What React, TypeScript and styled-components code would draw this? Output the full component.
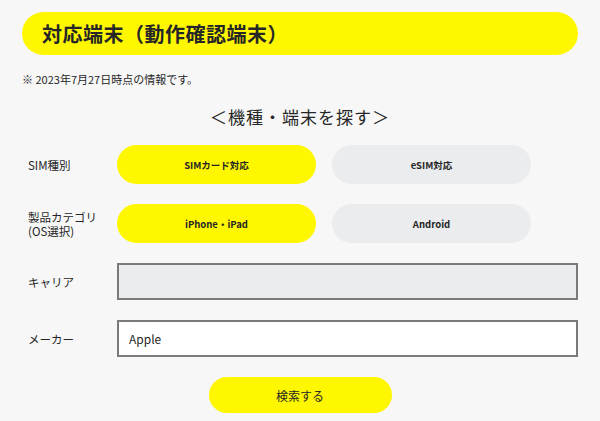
import React from 'react';
import styled, {createGlobalStyle} from 'styled-components';

const YELLOW = '#fff700';
const GRAY = '#ebecee';
const INK = '#262626';

const Global = createGlobalStyle`
  html, body {
    margin: 0;
    padding: 0;
    background: #f7f7f7;
  }
  body {
    font-family: "Noto Sans CJK JP", "Noto Sans", sans-serif;
    color: ${INK};
  }
`;

const Page = styled.main`
  width: 600px;
  height: 421px;
  box-sizing: border-box;
  padding: 12px 22px 0 22px;
  overflow: hidden;
`;

const Title = styled.h1`
  margin: 0;
  height: 43px;
  display: flex;
  align-items: center;
  padding-left: 20px;
  background: ${YELLOW};
  border-radius: 22px;
  font-size: 20px;
  font-weight: 700;
  letter-spacing: 0.5px;
`;

const Note = styled.p`
  margin: 16px 0 0 0;
  font-size: 11px;
  line-height: 16px;
`;

const Heading = styled.h2`
  margin: 18px 0 0 0;
  text-align: center;
  font-size: 17px;
  font-weight: 400;
  line-height: 24px;
  letter-spacing: 1px;
`;

const Form = styled.form`
  margin-top: 16px;
  padding-left: 6px;
  display: grid;
  grid-template-columns: 89px 461px;
  row-gap: 20px;
  align-items: center;
`;

const Label = styled.div`
  font-size: 11.5px;
  line-height: 16px;
`;

const LabelLine = styled.span`
  display: block;
  line-height: 14px;
`;

const Options = styled.div`
  display: flex;
  gap: 16px;
`;

const Option = styled.button<{$active?: boolean}>`
  width: 199px;
  height: 39px;
  border: none;
  border-radius: 20px;
  background: ${(p) => (p.$active ? YELLOW : GRAY)};
  font-family: inherit;
  font-size: 9.5px;
  font-weight: 700;
  color: ${INK};
  padding: 0;
`;

const Select = styled.div<{$filled?: boolean}>`
  height: 37px;
  box-sizing: border-box;
  border: 2px solid #7a7a7a;
  background: ${(p) => (p.$filled ? '#ffffff' : GRAY)};
  display: flex;
  align-items: center;
  padding-left: 10px;
  font-size: 12px;
`;

const Actions = styled.div`
  margin-top: 20px;
  display: flex;
  justify-content: center;
`;

const Search = styled.button`
  width: 183px;
  height: 36px;
  border: none;
  border-radius: 18px;
  background: ${YELLOW};
  font-family: inherit;
  font-size: 12px;
  color: ${INK};
  padding: 0;
`;

export default function App(): JSX.Element {
  return (
    <>
      <Global />
      <Page>
        <Title>対応端末（動作確認端末）</Title>
        <Note>※ 2023年7月27日時点の情報です。</Note>
        <Heading>＜機種・端末を探す＞</Heading>
        <Form onSubmit={(e) => e.preventDefault()}>
          <Label>SIM種別</Label>
          <Options>
            <Option type="button" $active>
              SIMカード対応
            </Option>
            <Option type="button">eSIM対応</Option>
          </Options>
          <Label>
            <LabelLine>製品カテゴリ</LabelLine>
            <LabelLine>(OS選択)</LabelLine>
          </Label>
          <Options>
            <Option type="button" $active>
              iPhone・iPad
            </Option>
            <Option type="button">Android</Option>
          </Options>
          <Label>キャリア</Label>
          <Select />
          <Label>メーカー</Label>
          <Select $filled>Apple</Select>
        </Form>
        <Actions>
          <Search type="button">検索する</Search>
        </Actions>
      </Page>
    </>
  );
}
